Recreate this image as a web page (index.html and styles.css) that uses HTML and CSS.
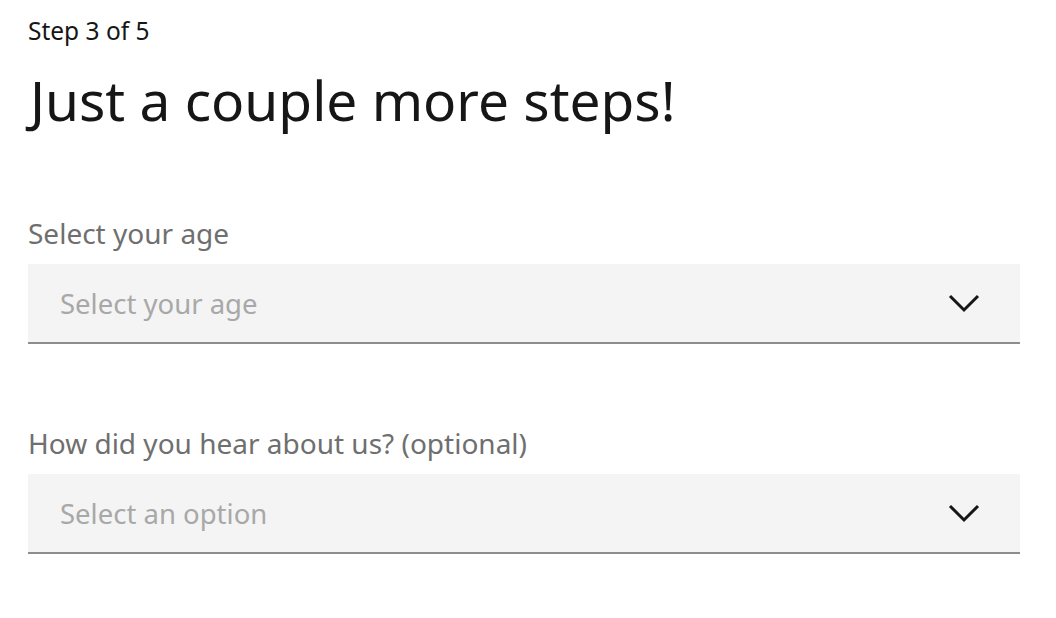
FILE: index.html
```html
<!DOCTYPE html>
<html>
<head>
<meta charset="utf-8">
<link rel="stylesheet" href="styles.css">
</head>
<body>
<main class="page">
  <p class="step">Step 3 of 5</p>
  <h1 class="title">Just a couple more steps!</h1>
  <div class="field field-first">
    <label class="label">Select your age</label>
    <div class="select">
      <span class="placeholder">Select your age</span>
      <svg class="chev" width="32" height="20" viewBox="0 0 32 20"><path d="M2 3 L16 17 L30 3" fill="none" stroke="#161616" stroke-width="3"/></svg>
    </div>
  </div>
  <div class="field">
    <label class="label">How did you hear about us? (optional)</label>
    <div class="select">
      <span class="placeholder">Select an option</span>
      <svg class="chev" width="32" height="20" viewBox="0 0 32 20"><path d="M2 3 L16 17 L30 3" fill="none" stroke="#161616" stroke-width="3"/></svg>
    </div>
  </div>
</main>
</body>
</html>
```
FILE: styles.css
```css
html, body { margin: 0; padding: 0; background: #fff; }
body { font-family: "Noto Sans", "Open Sans", sans-serif; color: #161616; }
.page { display: flex; flex-direction: column; padding: 16px 36px 0 28px; }
.step { margin: 0; font-size: 24.5px; line-height: 30px; }
.title { margin: 19px 0 0 2px; font-weight: 400; font-size: 55px; line-height: 70px; }
.field { display: flex; flex-direction: column; margin-top: 81px; }
.field-first { margin-top: 80px; }
.label { font-size: 28px; line-height: 36px; color: #6f6f6f; margin-bottom: 13px; }
.select { height: 78px; background: #f4f4f4; border-bottom: 2px solid #8d8d8d; display: flex; align-items: center; justify-content: space-between; padding: 0 40px 0 32px; }
.placeholder { font-size: 27.5px; color: #a8a8a8; }
.chev { display: block; }
```
